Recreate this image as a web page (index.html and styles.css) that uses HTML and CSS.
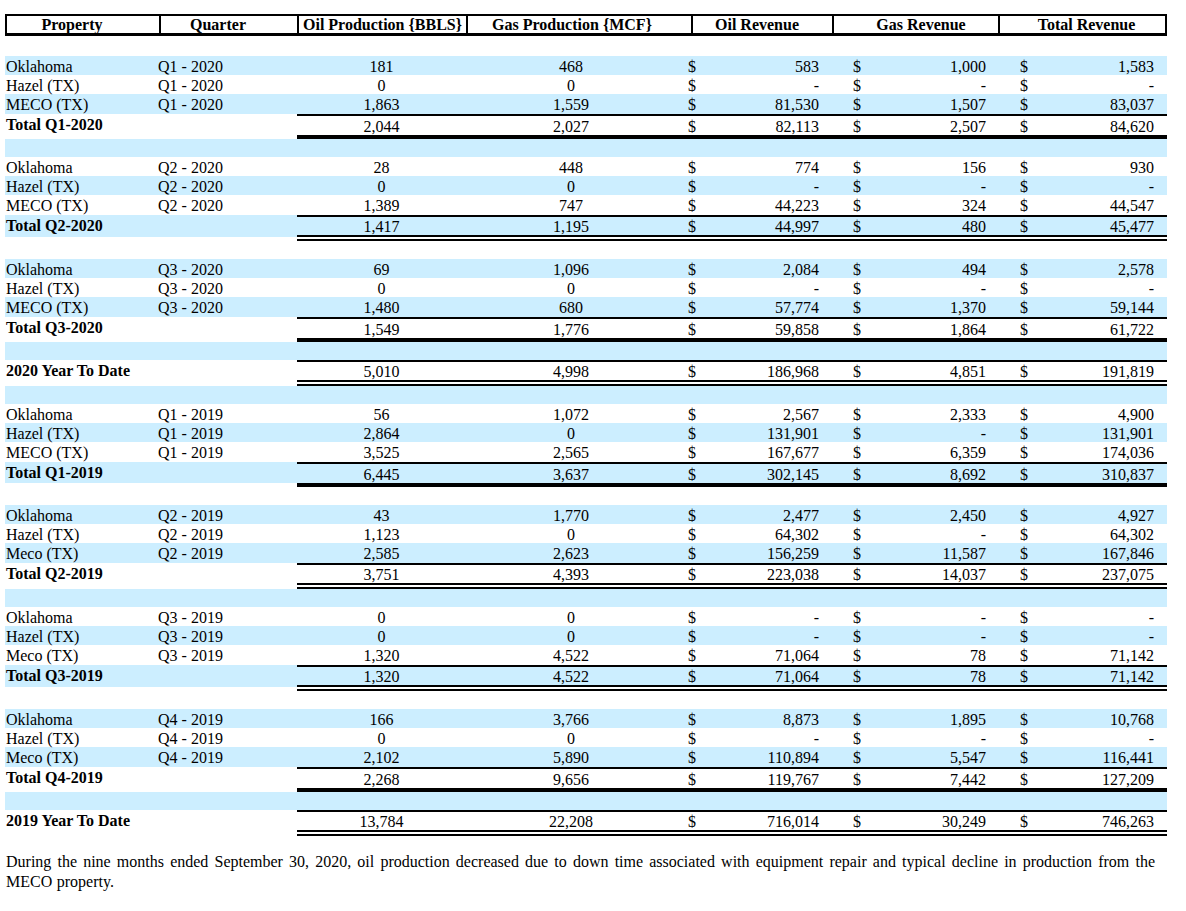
FILE: index.html
```html
<!DOCTYPE html>
<html lang="en">
<head>
<meta charset="utf-8">
<title>Production and Revenue by Property</title>
<link rel="stylesheet" href="styles.css">
</head>
<body>
<div class="page">
<table class="prod">
  <colgroup>
    <col class="w-prop"><col class="w-qtr"><col class="w-oil"><col class="w-gas"><col class="w-orev"><col class="w-grev"><col class="w-trev">
  </colgroup>
  <thead>
    <tr>
      <th class="h-prop">Property</th>
      <th class="h-qtr">Quarter</th>
      <th class="h-oil">Oil Production {BBLS}</th>
      <th class="h-gas">Gas Production {MCF}</th>
      <th class="h-orev">Oil Revenue</th>
      <th class="h-grev">Gas Revenue</th>
      <th class="h-trev">Total Revenue</th>
    </tr>
  </thead>
  <tbody>
    <tr class="gap first"><td colspan="7"></td></tr>
    <tr><td class="p">Oklahoma</td><td class="q">Q1 - 2020</td><td class="o">181</td><td class="g">468</td><td class="or"><span class="cur">$</span>583</td><td class="gr"><span class="cur">$</span>1,000</td><td class="tr"><span class="cur">$</span>1,583</td></tr>
    <tr><td class="p">Hazel (TX)</td><td class="q">Q1 - 2020</td><td class="o">0</td><td class="g">0</td><td class="or"><span class="cur">$</span>-</td><td class="gr"><span class="cur">$</span>-</td><td class="tr"><span class="cur">$</span>-</td></tr>
    <tr class="last"><td class="p">MECO (TX)</td><td class="q">Q1 - 2020</td><td class="o">1,863</td><td class="g">1,559</td><td class="or"><span class="cur">$</span>81,530</td><td class="gr"><span class="cur">$</span>1,507</td><td class="tr"><span class="cur">$</span>83,037</td></tr>
    <tr class="total thick"><td class="p lbl">Total Q1-2020</td><td class="q"></td><td class="o n">2,044</td><td class="g n">2,027</td><td class="or n"><span class="cur">$</span>82,113</td><td class="gr n"><span class="cur">$</span>2,507</td><td class="tr n"><span class="cur">$</span>84,620</td></tr>
    <tr class="gap"><td colspan="7"></td></tr>

    <tr><td class="p">Oklahoma</td><td class="q">Q2 - 2020</td><td class="o">28</td><td class="g">448</td><td class="or"><span class="cur">$</span>774</td><td class="gr"><span class="cur">$</span>156</td><td class="tr"><span class="cur">$</span>930</td></tr>
    <tr><td class="p">Hazel (TX)</td><td class="q">Q2 - 2020</td><td class="o">0</td><td class="g">0</td><td class="or"><span class="cur">$</span>-</td><td class="gr"><span class="cur">$</span>-</td><td class="tr"><span class="cur">$</span>-</td></tr>
    <tr class="last"><td class="p">MECO (TX)</td><td class="q">Q2 - 2020</td><td class="o">1,389</td><td class="g">747</td><td class="or"><span class="cur">$</span>44,223</td><td class="gr"><span class="cur">$</span>324</td><td class="tr"><span class="cur">$</span>44,547</td></tr>
    <tr class="total dbl"><td class="p lbl">Total Q2-2020</td><td class="q"></td><td class="o n">1,417</td><td class="g n">1,195</td><td class="or n"><span class="cur">$</span>44,997</td><td class="gr n"><span class="cur">$</span>480</td><td class="tr n"><span class="cur">$</span>45,477</td></tr>
    <tr class="gap"><td colspan="7"></td></tr>

    <tr><td class="p">Oklahoma</td><td class="q">Q3 - 2020</td><td class="o">69</td><td class="g">1,096</td><td class="or"><span class="cur">$</span>2,084</td><td class="gr"><span class="cur">$</span>494</td><td class="tr"><span class="cur">$</span>2,578</td></tr>
    <tr><td class="p">Hazel (TX)</td><td class="q">Q3 - 2020</td><td class="o">0</td><td class="g">0</td><td class="or"><span class="cur">$</span>-</td><td class="gr"><span class="cur">$</span>-</td><td class="tr"><span class="cur">$</span>-</td></tr>
    <tr class="last"><td class="p">MECO (TX)</td><td class="q">Q3 - 2020</td><td class="o">1,480</td><td class="g">680</td><td class="or"><span class="cur">$</span>57,774</td><td class="gr"><span class="cur">$</span>1,370</td><td class="tr"><span class="cur">$</span>59,144</td></tr>
    <tr class="total thick"><td class="p lbl">Total Q3-2020</td><td class="q"></td><td class="o n">1,549</td><td class="g n">1,776</td><td class="or n"><span class="cur">$</span>59,858</td><td class="gr n"><span class="cur">$</span>1,864</td><td class="tr n"><span class="cur">$</span>61,722</td></tr>
    <tr class="gap"><td colspan="7"></td></tr>

    <tr class="total dbl"><td class="p lbl" colspan="2">2020 Year To Date</td><td class="o n">5,010</td><td class="g n">4,998</td><td class="or n"><span class="cur">$</span>186,968</td><td class="gr n"><span class="cur">$</span>4,851</td><td class="tr n"><span class="cur">$</span>191,819</td></tr>
    <tr class="gap"><td colspan="7"></td></tr>

    <tr><td class="p">Oklahoma</td><td class="q">Q1 - 2019</td><td class="o">56</td><td class="g">1,072</td><td class="or"><span class="cur">$</span>2,567</td><td class="gr"><span class="cur">$</span>2,333</td><td class="tr"><span class="cur">$</span>4,900</td></tr>
    <tr><td class="p">Hazel (TX)</td><td class="q">Q1 - 2019</td><td class="o">2,864</td><td class="g">0</td><td class="or"><span class="cur">$</span>131,901</td><td class="gr"><span class="cur">$</span>-</td><td class="tr"><span class="cur">$</span>131,901</td></tr>
    <tr class="last"><td class="p">MECO (TX)</td><td class="q">Q1 - 2019</td><td class="o">3,525</td><td class="g">2,565</td><td class="or"><span class="cur">$</span>167,677</td><td class="gr"><span class="cur">$</span>6,359</td><td class="tr"><span class="cur">$</span>174,036</td></tr>
    <tr class="total thick"><td class="p lbl">Total Q1-2019</td><td class="q"></td><td class="o n">6,445</td><td class="g n">3,637</td><td class="or n"><span class="cur">$</span>302,145</td><td class="gr n"><span class="cur">$</span>8,692</td><td class="tr n"><span class="cur">$</span>310,837</td></tr>
    <tr class="gap"><td colspan="7"></td></tr>

    <tr><td class="p">Oklahoma</td><td class="q">Q2 - 2019</td><td class="o">43</td><td class="g">1,770</td><td class="or"><span class="cur">$</span>2,477</td><td class="gr"><span class="cur">$</span>2,450</td><td class="tr"><span class="cur">$</span>4,927</td></tr>
    <tr><td class="p">Hazel (TX)</td><td class="q">Q2 - 2019</td><td class="o">1,123</td><td class="g">0</td><td class="or"><span class="cur">$</span>64,302</td><td class="gr"><span class="cur">$</span>-</td><td class="tr"><span class="cur">$</span>64,302</td></tr>
    <tr class="last"><td class="p">Meco (TX)</td><td class="q">Q2 - 2019</td><td class="o">2,585</td><td class="g">2,623</td><td class="or"><span class="cur">$</span>156,259</td><td class="gr"><span class="cur">$</span>11,587</td><td class="tr"><span class="cur">$</span>167,846</td></tr>
    <tr class="total dbl"><td class="p lbl">Total Q2-2019</td><td class="q"></td><td class="o n">3,751</td><td class="g n">4,393</td><td class="or n"><span class="cur">$</span>223,038</td><td class="gr n"><span class="cur">$</span>14,037</td><td class="tr n"><span class="cur">$</span>237,075</td></tr>
    <tr class="gap"><td colspan="7"></td></tr>

    <tr><td class="p">Oklahoma</td><td class="q">Q3 - 2019</td><td class="o">0</td><td class="g">0</td><td class="or"><span class="cur">$</span>-</td><td class="gr"><span class="cur">$</span>-</td><td class="tr"><span class="cur">$</span>-</td></tr>
    <tr><td class="p">Hazel (TX)</td><td class="q">Q3 - 2019</td><td class="o">0</td><td class="g">0</td><td class="or"><span class="cur">$</span>-</td><td class="gr"><span class="cur">$</span>-</td><td class="tr"><span class="cur">$</span>-</td></tr>
    <tr class="last"><td class="p">Meco (TX)</td><td class="q">Q3 - 2019</td><td class="o">1,320</td><td class="g">4,522</td><td class="or"><span class="cur">$</span>71,064</td><td class="gr"><span class="cur">$</span>78</td><td class="tr"><span class="cur">$</span>71,142</td></tr>
    <tr class="total dbl"><td class="p lbl">Total Q3-2019</td><td class="q"></td><td class="o n">1,320</td><td class="g n">4,522</td><td class="or n"><span class="cur">$</span>71,064</td><td class="gr n"><span class="cur">$</span>78</td><td class="tr n"><span class="cur">$</span>71,142</td></tr>
    <tr class="gap"><td colspan="7"></td></tr>

    <tr><td class="p">Oklahoma</td><td class="q">Q4 - 2019</td><td class="o">166</td><td class="g">3,766</td><td class="or"><span class="cur">$</span>8,873</td><td class="gr"><span class="cur">$</span>1,895</td><td class="tr"><span class="cur">$</span>10,768</td></tr>
    <tr><td class="p">Hazel (TX)</td><td class="q">Q4 - 2019</td><td class="o">0</td><td class="g">0</td><td class="or"><span class="cur">$</span>-</td><td class="gr"><span class="cur">$</span>-</td><td class="tr"><span class="cur">$</span>-</td></tr>
    <tr class="last"><td class="p">Meco (TX)</td><td class="q">Q4 - 2019</td><td class="o">2,102</td><td class="g">5,890</td><td class="or"><span class="cur">$</span>110,894</td><td class="gr"><span class="cur">$</span>5,547</td><td class="tr"><span class="cur">$</span>116,441</td></tr>
    <tr class="total thick"><td class="p lbl">Total Q4-2019</td><td class="q"></td><td class="o n">2,268</td><td class="g n">9,656</td><td class="or n"><span class="cur">$</span>119,767</td><td class="gr n"><span class="cur">$</span>7,442</td><td class="tr n"><span class="cur">$</span>127,209</td></tr>
    <tr class="gap"><td colspan="7"></td></tr>

    <tr class="total dbl"><td class="p lbl" colspan="2">2019 Year To Date</td><td class="o n">13,784</td><td class="g n">22,208</td><td class="or n"><span class="cur">$</span>716,014</td><td class="gr n"><span class="cur">$</span>30,249</td><td class="tr n"><span class="cur">$</span>746,263</td></tr>
  </tbody>
</table>
<p class="note">During the nine months ended September 30, 2020, oil production decreased due to down time associated with equipment repair and typical decline in production from the MECO property.</p>
</div>
</body>
</html>
```
FILE: styles.css
```css
* {
  box-sizing: border-box;
}

body {
  margin: 0;
  background: #ffffff;
  color: #000000;
  font-family: "Liberation Serif", "Times New Roman", serif;
  font-size: 16px;
}

.page {
  padding: 14px 0 0 5px;
}

.prod {
  border-collapse: separate;
  border-spacing: 0;
  table-layout: fixed;
  width: 1162px;
}

.w-prop { width: 154px; }
.w-qtr { width: 138px; }
.w-oil { width: 169px; }
.w-gas { width: 225px; }
.w-orev { width: 141px; }
.w-grev { width: 166px; }
.w-trev { width: 169px; }

/* header */
.prod thead th {
  font-weight: bold;
  line-height: 16px;
  padding: 1px 0 0 0;
  border-top: 2px solid #000;
  border-bottom: 3px solid #000;
  border-left: 2px solid #000;
  text-align: center;
  white-space: nowrap;
}

.prod thead th.h-trev {
  border-right: 2px solid #000;
}

.prod thead th.h-prop { padding-right: 22px; }
.prod thead th.h-qtr { padding-right: 22px; }
.prod thead th.h-gas { padding-right: 15px; }
.prod thead th.h-orev { padding-right: 11px; }
.prod thead th.h-grev { padding-left: 10px; }
.prod thead th.h-trev { padding-left: 8px; }

/* body rows */
.prod tbody td {
  padding: 2px 0 0 0;
  line-height: 17px;
  white-space: nowrap;
  vertical-align: top;
}

.prod tbody tr.last td {
  padding-bottom: 1px;
}

.prod tbody tr:nth-child(even) td {
  background-color: #cceeff;
}

.prod tbody td.p { padding-left: 1px; }
.prod tbody td.q { text-indent: -1px; }
.prod tbody td.o { text-align: center; }
.prod tbody td.g { text-align: center; padding-right: 15px; }
.prod tbody td.or { text-align: right; padding-right: 13px; }
.prod tbody td.gr { text-align: right; padding-left: 21px; padding-right: 12px; }
.prod tbody td.tr { text-align: right; padding-left: 22px; padding-right: 13px; }

.cur {
  float: left;
}

.or .cur {
  margin-left: -3px;
}

/* empty spacer rows */
.prod tbody tr.gap td {
  height: 18px;
  padding: 0;
  line-height: 0;
}

.prod tbody tr.gap.first td {
  height: 20px;
}

/* totals */
.lbl {
  font-weight: bold;
}

.prod tbody tr.total td {
  border-bottom: 4px solid transparent;
  background-clip: padding-box;
}

.prod tbody tr.total td.n {
  border-top: 2px solid #000;
}

.prod tbody tr.thick td.n {
  border-bottom: 4px solid #000;
}

.prod tbody tr.dbl td.n {
  padding-top: 1px;
  border-bottom: 6px double #000;
}

.note {
  width: 1149px;
  margin: 16px 0 0 1px;
  line-height: 20px;
  text-align: justify;
  word-spacing: 0.5px;
}
```
